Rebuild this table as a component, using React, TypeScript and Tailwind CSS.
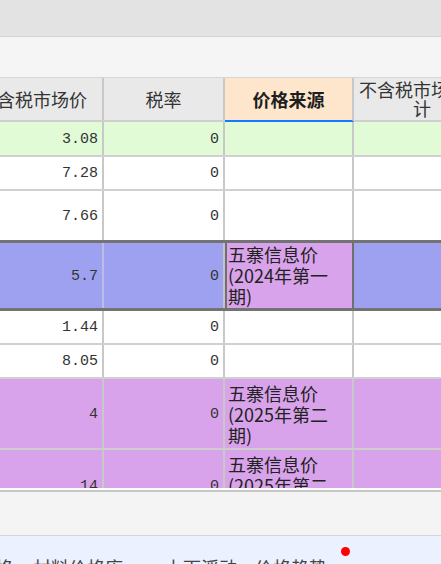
import React from "react";

const cjk = { fontFamily: '"Noto Sans CJK SC", "Noto Sans", sans-serif' };
const mono = { fontFamily: '"Liberation Mono", "DejaVu Sans Mono", monospace' };

type Row = {
  a: string;
  b: string;
  h: string;
  bg: string;
  last?: boolean;
};

function NumCell({ v, cls }: { v: string; cls: string }) {
  return (
    <div
      className={`flex items-center justify-end pr-[4px] pt-[3px] text-[15px] text-[#333] ${cls}`}
      style={mono}
    >
      {v}
    </div>
  );
}

export default function App() {
  const rows: Row[] = [
    { a: "3.08", b: "0", h: "h-[35px]", bg: "bg-[#e1fbd7]" },
    { a: "7.28", b: "0", h: "h-[34px]", bg: "bg-white" },
    { a: "7.66", b: "0", h: "h-[49px]", bg: "bg-white", last: true },
  ];
  const rows2: Row[] = [
    { a: "1.44", b: "0", h: "h-[34px]", bg: "bg-white" },
    { a: "8.05", b: "0", h: "h-[34px]", bg: "bg-white" },
  ];

  const renderRow = (r: Row, i: number) => (
    <div
      key={i}
      className={`grid grid-cols-[140px_121px_129px_136px] ${r.h} ${r.bg} ${
        r.last ? "" : "border-b-2 border-[#d0d0d0]"
      }`}
    >
      <NumCell v={r.a} cls="border-r-2 border-[#c8c8c8]" />
      <NumCell v={r.b} cls="border-r-2 border-[#c8c8c8]" />
      <div className="border-r-2 border-[#c8c8c8]" />
      <div />
    </div>
  );

  const textCell = (lines: string[]) => (
    <div className="pl-[1px] pt-[1px] text-[18px] leading-[21px] text-[#222]" style={cjk}>
      {lines.map((l, i) => (
        <div key={i} className="whitespace-nowrap">
          {l}
        </div>
      ))}
    </div>
  );

  return (
    <div className="w-[441px] h-[564px] overflow-hidden bg-white flex flex-col" style={cjk}>
      <div className="h-[37px] shrink-0 bg-[#e3e3e3] border-b border-[#d3d3d3]" />
      <div className="h-[41px] shrink-0 bg-[#f5f5f5] border-b border-[#d6d6d6]" />

      <div className="h-[410px] shrink-0 overflow-hidden bg-white">
        <div className="-ml-[36px] w-[526px]">
          {/* header */}
          <div className="grid grid-cols-[140px_121px_129px_136px] h-[44px] bg-[#e9e9e9] border-b-2 border-[#cfcfcf] text-[18px] leading-[19px] text-[#333]">
            <div className="flex items-center justify-center text-center border-r-2 border-[#c8c8c8]">
              不含税市场价
            </div>
            <div className="flex items-center justify-center border-r-2 border-[#c8c8c8]">
              税率
            </div>
            <div className="-mb-[2px] flex items-center justify-center font-bold text-[#1e1e1e] bg-[#fde6cc] border-r-2 border-[#c8c8c8] border-b-2 border-b-[#1677ff]">
              价格来源
            </div>
            <div className="flex items-center justify-center text-center px-[4px]">
              不含税市场价合计
            </div>
          </div>

          {rows.map(renderRow)}

          {/* selected blue row */}
          <div className="grid grid-cols-[140px_121px_129px_136px] h-[71px] bg-[#9ea1ef] border-y-[3px] border-[#737373]">
            <NumCell v="5.7" cls="border-r-2 border-[#bcbde6]" />
            <NumCell v="0" cls="border-r-2 border-[#c4c4c4]" />
            <div className="bg-[#d8a3ea] border-x-2 border-[#6f6f6f]">
              {textCell(["五寨信息价", "(2024年第一", "期)"])}
            </div>
            <div />
          </div>

          {rows2.map(renderRow)}

          <div className="grid grid-cols-[140px_121px_129px_136px] h-[71px] bg-[#d9a3eb] border-b-2 border-[#cdcdcd]">
            <NumCell v="4" cls="border-r-2 border-[#c8c8c8]" />
            <NumCell v="0" cls="border-r-2 border-[#c8c8c8]" />
            <div className="border-r-2 border-[#c8c8c8] pt-[3px] pl-[2px]">
              {textCell(["五寨信息价", "(2025年第二", "期)"])}
            </div>
            <div />
          </div>

          <div className="grid grid-cols-[140px_121px_129px_136px] h-[71px] bg-[#d9a3eb]">
            <NumCell v="14" cls="border-r-2 border-[#c8c8c8]" />
            <NumCell v="0" cls="border-r-2 border-[#c8c8c8]" />
            <div className="border-r-2 border-[#c8c8c8] pt-[3px] pl-[2px]">
              {textCell(["五寨信息价", "(2025年第二", "期)"])}
            </div>
            <div />
          </div>
        </div>
      </div>

      <div className="h-[2px] shrink-0 bg-white" />
      <div className="h-[2px] shrink-0 bg-[#c6c6c6]" />
      <div className="h-[44px] shrink-0 bg-[#f4f4f4] border-b border-[#d5d5d5]" />
      <div className="relative flex-1 bg-[#ebf1fe] overflow-hidden">
        <div className="flex pt-[21px] text-[18px] leading-[20px] text-[#444] whitespace-nowrap">
          <span className="ml-[-23px]">价格</span>
          <span className="ml-[20px]">材料价格库</span>
          <span className="ml-[42px]">上下浮动</span>
          <span className="ml-[18px]">价格趋势</span>
        </div>
        <div className="absolute left-[341px] top-[11px] w-[9px] h-[9px] rounded-full bg-[#ff0000]" />
      </div>
    </div>
  );
}
